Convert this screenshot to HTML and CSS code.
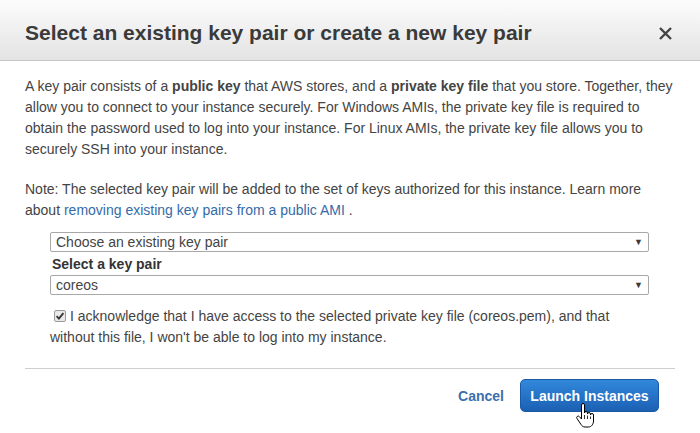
FILE: index.html
```html
<!DOCTYPE html>
<html>

<head>
    <meta name="viewport" content="width=device-width, initial-scale=1">
    <link rel="stylesheet" href="styles.css">
</head>

<body>

    <div class="modal">
        <div class="modal-header">
            <h1 class="modal-title">Select an existing key pair or create a new key pair</h1>
            <svg class="close" width="13" height="13" viewBox="0 0 13 13">
                <path d="M1 1 L12 12 M12 1 L1 12" stroke="#444" stroke-width="2.4" fill="none" />
            </svg>
        </div>

        <div class="modal-body">
            <p class="intro">A key pair consists of a <b>public key</b> that AWS stores, and a <b>private key file</b> that you store. Together, they allow you to connect to your instance securely. For Windows AMIs, the private key file is required to obtain the password used to log into your instance. For Linux AMIs, the private key file allows you to securely SSH into your instance.</p>

            <p class="note">Note: The selected key pair will be added to the set of keys authorized for this instance. Learn more about <a href="#" class="link">removing existing key pairs from a public AMI</a> .</p>

            <div class="form">
                <div class="select">
                    <span>Choose an existing key pair</span>
                    <span class="arrow">&#9660;</span>
                </div>
                <div class="label">Select a key pair</div>
                <div class="select">
                    <span>coreos</span>
                    <span class="arrow">&#9660;</span>
                </div>

                <p class="ack">
                    <svg class="check" width="12" height="12" viewBox="0 0 12 12">
                        <rect x="0.5" y="0.5" width="11" height="11" rx="1.5" fill="#e9e9e9" stroke="#9a9a9a" />
                        <path d="M2.6 6.2 L4.9 8.6 L9.4 3.2" stroke="#333" stroke-width="1.8" fill="none" />
                    </svg>I acknowledge that I have access to the selected private key file (coreos.pem), and that without this file, I won't be able to log into my instance.
                </p>
            </div>

            <hr class="divider">

            <div class="modal-footer">
                <a href="#" class="cancel">Cancel</a>
                <button class="btn">Launch Instances</button>
            </div>
        </div>

        <!-- mouse pointer sitting over the launch button -->
        <svg class="cursor" width="19" height="25" viewBox="0 0 19 25">
            <path d="M5.5 2 a1.5 1.5 0 0 1 3 0 V10 a1.5 1.5 0 0 1 3 0 v1 a1.5 1.5 0 0 1 3 0 v1 a1.5 1.5 0 0 1 3 0 V18 c0 3-2 6-5 6 h-3.5 c-2 0-3-1-4-2.5 L1 15.5 a1.5 1.5 0 0 1 2.4-1.8 L5.5 16 Z" fill="#fff" stroke="#000" stroke-width="1" />
            <path d="M8.5 12 v4 M11.5 12.5 v3.5 M14.5 13.5 v2.5" stroke="#000" stroke-width="0.8" />
        </svg>
    </div>

</body>

</html>
```

FILE: styles.css
```css
html,
body {
    margin: 0;
    padding: 0;
    background-color: #fff;
    font-family: "Liberation Sans", Arial, sans-serif;
    font-size: 14px;
    color: #444;
}

.modal {
    position: relative;
    width: 700px;
    height: 433px;
    overflow: hidden;
    background-color: #fff;
}

.modal-header {
    box-sizing: border-box;
    height: 61px;
    padding: 6px 28px 0 25px;
    display: flex;
    align-items: center;
    justify-content: space-between;
    background: linear-gradient(#fcfcfc, #e3e3e3);
    border-bottom: 1px solid #c6c6c6;
}

.modal-title {
    margin: 0;
    font-size: 21px;
    font-weight: bold;
    color: #3a3a3a;
}

.modal-body {
    padding: 15px 25px 0 25px;
}

.intro,
.note {
    margin: 0;
    line-height: 21px;
}

.intro {
    margin-bottom: 19px;
}

.note {
    margin-bottom: 11px;
}

.link {
    color: #356ba8;
    text-decoration: none;
}

.form {
    margin: 0 26px 0 25px;
}

.select {
    box-sizing: border-box;
    height: 20px;
    padding: 0 5px 0 5px;
    display: flex;
    align-items: center;
    justify-content: space-between;
    border: 1px solid #a8a8a8;
    border-radius: 2px;
    background-color: #fff;
    color: #444;
}

.arrow {
    font-size: 9px;
    color: #3a3a3a;
}

.label {
    margin-top: 1px;
    line-height: 22px;
    font-weight: bold;
    color: #333;
    padding-left: 2px;
}

.ack {
    margin: 11px 0 0 0;
    line-height: 21px;
}

.check {
    vertical-align: -1px;
    margin: 0 4px 0 4px;
}

.divider {
    margin: 20px 0 0 0;
    border: none;
    border-top: 1px solid #cfcfcf;
}

.modal-footer {
    margin-top: 10px;
    padding-right: 16px;
    display: flex;
    align-items: center;
    justify-content: flex-end;
    gap: 16px;
}

.cancel {
    font-weight: bold;
    color: #3b70ad;
    text-decoration: none;
}

.btn {
    box-sizing: border-box;
    height: 33px;
    width: 139px;
    padding: 0;
    border: 1px solid #1b5aa3;
    border-radius: 5px;
    background: linear-gradient(#3288dc, #1b60b3);
    color: #fff;
    font-family: "Liberation Sans", Arial, sans-serif;
    font-size: 14px;
    font-weight: bold;
    cursor: pointer;
}

.cursor {
    position: absolute;
    left: 576px;
    top: 403px;
}
```
